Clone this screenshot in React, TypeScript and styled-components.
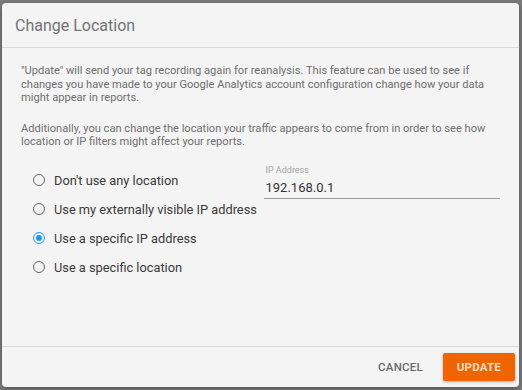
import React, { useState } from 'react'
import styled, { createGlobalStyle } from 'styled-components'

const GlobalStyle = createGlobalStyle`
  html, body {
    margin: 0;
    padding: 0;
    width: 522px;
    height: 390px;
    overflow: hidden;
    background: #7c7c7c;
    font-family: Roboto, 'Liberation Sans', sans-serif;
  }
`

const Backdrop = styled.div`
  width: 522px;
  height: 390px;
  padding: 3px 3px 3px 2px;
  box-sizing: border-box;
`

const Dialog = styled.div`
  height: 100%;
  background: #f4f4f4;
  border-radius: 4px;
  box-shadow: 0 2px 6px rgba(0, 0, 0, 0.35);
  display: flex;
  flex-direction: column;
`

const Header = styled.div`
  height: 44px;
  padding: 0 13px;
  display: flex;
  align-items: center;
  font-size: 16px;
  color: #737373;
  border-bottom: 1px solid #d9d9d9;
`

const Body = styled.div`
  flex: 1;
  padding: 16px 19px 0 19px;
  border-bottom: 1px solid #d9d9d9;
`

const Paragraph = styled.p`
  margin: 0 0 17px;
  font-size: 11.1px;
  line-height: 13.6px;
  color: #6f6f6f;
`

const Options = styled.div`
  display: flex;
  margin-top: 8px;
`

const RadioList = styled.div`
  display: flex;
  flex-direction: column;
  padding-left: 12px;
  width: 231px;
`

const RadioRow = styled.label`
  display: flex;
  align-items: center;
  height: 29px;
  font-size: 12.8px;
  color: #3a3a3a;
  cursor: pointer;
`

const RadioCircle = styled.span<{ checked: boolean }>`
  width: 12px;
  height: 12px;
  box-sizing: border-box;
  border-radius: 50%;
  border: 1.6px solid ${({ checked }) => (checked ? '#2196f3' : '#666')};
  margin-right: 9px;
  display: flex;
  align-items: center;
  justify-content: center;

  &::after {
    content: '';
    width: 6px;
    height: 6px;
    border-radius: 50%;
    background: #2196f3;
    display: ${({ checked }) => (checked ? 'block' : 'none')};
  }
`

const Field = styled.div`
  width: 237px;
  margin-top: -1px;
`

const FieldLabel = styled.div`
  font-size: 9px;
  color: #a5a5a5;
  padding-left: 2px;
  height: 11px;
`

const FieldInput = styled.div`
  font-size: 13px;
  color: #333;
  padding: 4px 2px 3px;
  border-bottom: 1px solid #9a9a9a;
`

const Footer = styled.div`
  height: 40px;
  display: flex;
  align-items: center;
  justify-content: flex-end;
  padding-right: 4px;
  gap: 6px;
`

const Button = styled.button<{ primary?: boolean }>`
  font-family: Roboto, 'Liberation Sans', sans-serif;
  font-size: 11.5px;
  font-weight: ${({ primary }) => (primary ? 700 : 500)};
  letter-spacing: 0.2px;
  border: none;
  border-radius: 2px;
  height: 28px;
  padding: 0 14px;
  color: ${({ primary }) => (primary ? '#ffdcc4' : '#6a6a6a')};
  background: ${({ primary }) => (primary ? '#f06400' : 'transparent')};
  box-shadow: ${({ primary }) => (primary ? '0 1px 3px rgba(0,0,0,0.3)' : 'none')};
  cursor: pointer;
`

const options = [
  "Don't use any location",
  'Use my externally visible IP address',
  'Use a specific IP address',
  'Use a specific location',
]

export default function App() {
  const [selected, setSelected] = useState(2)

  return (
    <>
      <GlobalStyle />
      <Backdrop>
        <Dialog>
          <Header>Change Location</Header>
          <Body>
            <Paragraph>
              "Update" will send your tag recording again for reanalysis. This feature can be used to see if
              changes you have made to your Google Analytics account configuration change how your data
              might appear in reports.
            </Paragraph>
            <Paragraph>
              Additionally, you can change the location your traffic appears to come from in order to see how
              location or IP filters might affect your reports.
            </Paragraph>
            <Options>
              <RadioList>
                {options.map((label, i) => (
                  <RadioRow key={label} onClick={() => setSelected(i)}>
                    <RadioCircle checked={selected === i} />
                    {label}
                  </RadioRow>
                ))}
              </RadioList>
              <Field>
                <FieldLabel>IP Address</FieldLabel>
                <FieldInput>192.168.0.1</FieldInput>
              </Field>
            </Options>
          </Body>
          <Footer>
            <Button>CANCEL</Button>
            <Button primary>UPDATE</Button>
          </Footer>
        </Dialog>
      </Backdrop>
    </>
  )
}
